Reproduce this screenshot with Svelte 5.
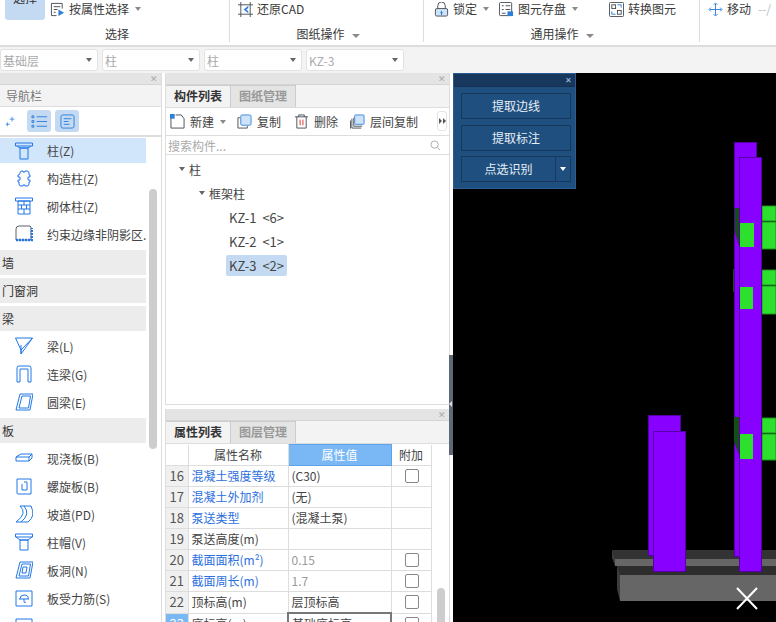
<script>
	// line icons, all drawn on an 18x18 box
	const icons = {
		column: '<path d="M.5 1h17v3H.5zM2 4l3 2h8l3-2M5 6h8v11H5z"/>',
		gz: '<path d="M5 4q0-2 2-2h1v1h2V2h2q2 0 2 2v2h1v2h-2v3h2v2h-1v2q0 2-2 2h-2v-1H8v1H6q-2 0-2-2v-2H3v-2h2V8H3V6h1z"/>',
		brick: '<path d="M.5 1h17v3H.5zM3 4h12v13H3zM3 8h12M3 12h12M9 4v4M6.500 8v4M11.500 8v4M9 12v5"/>',
		edge: '<path d="M4 1h11l1 1v13H1V4q0-3 3-3z" stroke="#5a6068"/><path d="M1 15h16V3" stroke-width="2.500" stroke-dasharray="2 1"/>',
		beam: '<path d="M.5 1h17L6 13zM17.500 1L6 17V13M6 1"/><path d="M6 8v9"/>',
		lintel: '<path d="M2 17V3q0-2 2-2h10q2 0 2 2v14h-3V4H5v13z"/>',
		ring: '<path d="M5 1h13l-3 16H1zM7 3h8.500l-2 12H4z"/>',
		slab: '<path d="M1 8l5-3h11v4l-3 3H1zM1 8h13v4M14 8l3-3"/>',
		spiral: '<path d="M2 2h14v15H3q-1 0-1-1z"/><path d="M7 7v6h5V5H9"/>',
		ramp: '<path d="M5 1q8 7-4 16h12q8-6 3-16zM9 1q7 8-3 16"/>',
		cap: '<path d="M.5 1h17v3H.5zM1 4l4 3h8l4-3M5 7h8v10H5z"/>',
		hole: '<path d="M5 1h13l-3 16H1z"/><path d="M7 3h8.500l-2 12H4z"/><path d="M8 6h4l-1 6H7z"/>',
		force: '<path d="M1 2h16v15H1z"/><path d="M4 10h10M9 6q5 0 4 4M9 6q-4 0-4 4M9 10v3q0 1 2 0"/>',
		extra: '<path d="M1 2h16v15H1z"/>'
	};

	const nav = [
		{ icon: 'column', label: '柱(Z)', active: true },
		{ icon: 'gz', label: '构造柱(Z)' },
		{ icon: 'brick', label: '砌体柱(Z)' },
		{ icon: 'edge', label: '约束边缘非阴影区...' },
		{ group: '墙' },
		{ group: '门窗洞' },
		{ group: '梁' },
		{ icon: 'beam', label: '梁(L)' },
		{ icon: 'lintel', label: '连梁(G)' },
		{ icon: 'ring', label: '圆梁(E)' },
		{ group: '板' },
		{ icon: 'slab', label: '现浇板(B)' },
		{ icon: 'spiral', label: '螺旋板(B)' },
		{ icon: 'ramp', label: '坡道(PD)' },
		{ icon: 'cap', label: '柱帽(V)' },
		{ icon: 'hole', label: '板洞(N)' },
		{ icon: 'force', label: '板受力筋(S)' },
		{ icon: 'extra', label: '' }
	];

	const combos = ['基础层', '柱', '柱', 'KZ-3'];

	const rows = [
		{ n: 16, name: '混凝土强度等级', value: '(C30)', link: true, check: true },
		{ n: 17, name: '混凝土外加剂', value: '(无)', link: true },
		{ n: 18, name: '泵送类型', value: '(混凝土泵)', link: true },
		{ n: 19, name: '泵送高度(m)', value: '' },
		{ n: 20, name: '截面面积(m²)', value: '0.15', link: true, check: true, muted: true },
		{ n: 21, name: '截面周长(m)', value: '1.7', link: true, check: true, muted: true },
		{ n: 22, name: '顶标高(m)', value: '层顶标高', check: true },
		{ n: 23, name: '底标高(m)', value: '基础底标高', check: true, current: true }
	];
</script>

<div class="app">
	<header class="ribbon">
		<section class="group g1">
			<div class="tools">
				<div class="big"><span>选择</span></div>
				<div class="tool">
					<svg class="ti" viewBox="0 0 16 16"><path d="M13 7V1.500H1.500v13H7M4 5h7M4 8h4M4 11h2" /><path class="solid blue" d="M9 8l6 3.500L9 15z" /></svg>
					按属性选择<i class="caret"></i>
				</div>
			</div>
			<div class="label">选择</div>
		</section>
		<section class="group g2">
			<div class="tools">
				<div class="tool">
					<svg class="ti" viewBox="0 0 16 16"><path d="M3 0v16M13 0v16M0 3h16M0 13h16" /><path class="solid blue" d="M6 8l5-4v2.500L9 8l2 2v2z" /></svg>
					还原CAD
				</div>
			</div>
			<div class="label">图纸操作<i class="caret lg"></i></div>
		</section>
		<section class="group g3">
			<div class="tools">
				<div class="tool lock">
					<svg class="ti" viewBox="0 0 16 16"><path d="M4 7V4a4 4 0 0 1 8 0v3" /><rect x="1.500" y="7" width="13" height="8" rx="1.500" fill="#cfe3f8" /><path class="solid blue" d="M6.500 12l1.500-3 1.500 3h-1v2h-1v-2z" /></svg>
					锁定<i class="caret"></i>
				</div>
				<div class="tool disk">
					<svg class="ti" viewBox="0 0 16 16"><rect x="0.500" y="0.500" width="13" height="14" rx="1" /><path d="M3 4h2M7 4h5M3 8h2M7 8h5M3 12h4" /><rect class="solid blue" x="9" y="10" width="6" height="5" /></svg>
					图元存盘<i class="caret"></i>
				</div>
				<div class="tool swap">
					<svg class="ti" viewBox="0 0 16 16"><rect x="0.500" y="0.500" width="15" height="15" rx="1" /><rect x="3" y="3" width="4" height="4" /><rect x="9" y="9" width="4" height="4" /><path class="bl" d="M9 3h4v3M7 13H3v-3" /></svg>
					转换图元
				</div>
			</div>
			<div class="label">通用操作<i class="caret lg"></i></div>
		</section>
		<section class="group g4">
			<div class="tools">
				<div class="tool">
					<svg class="ti" viewBox="0 0 16 16"><path class="bl" d="M8 2v12M2 8h12M6 3l2-2 2 2M6 13l2 2 2-2M3 6L1 8l2 2M13 6l2 2-2 2" /></svg>
					移动
				</div>
				<span class="faded">--/</span>
			</div>
		</section>
	</header>

	<div class="combos">
		{#each combos as c}
			<div class="combo"><span>{c}</span><i class="caret dark"></i></div>
		{/each}
	</div>

	<main class="body">
		<aside class="nav">
			<div class="dock"><span class="x">✕</span></div>
			<div class="nav-title">导航栏</div>
			<div class="nav-tools">
				<svg class="mini" viewBox="0 0 14 14"><path class="bl" d="M9 1v6M6 4h6M3 8v5M1 10.500h5" /></svg>
				<div class="toggle">
					<svg viewBox="0 0 18 14"><path class="bl" d="M6 2h11M6 7h11M6 12h11" /><path class="bl" d="M1 1h2v2H1zM1 6h2v2H1zM1 11h2v2H1z" /></svg>
				</div>
				<div class="toggle">
					<svg viewBox="0 0 16 16"><rect class="bl" x="1" y="1" width="14" height="14" rx="2" /><path class="bl" d="M4 5h8M4 8h5M4 11h6" /></svg>
				</div>
			</div>
			<div class="nav-list">
				{#each nav as item}
					{#if item.group}
						<div class="nav-group">{item.group}</div>
					{:else}
						<div class="nav-item" class:active={item.active}>
							<svg viewBox="0 0 18 18">{@html icons[item.icon]}</svg>
							<span>{item.label}</span>
						</div>
					{/if}
				{/each}
				<div class="nav-scroll"></div>
			</div>
		</aside>

		<div class="middle">
			<section class="panel top">
				<div class="dock"><span class="x">✕</span></div>
				<div class="tabs">
					<div class="tab on">构件列表</div>
					<div class="tab">图纸管理</div>
				</div>
				<div class="actions">
					<div class="act new">
						<svg viewBox="0 0 16 16"><path d="M1 3v12h14V5l-3-4H6" /><path class="solid blue" d="M0 0h5v5H0z" /></svg>
						新建<i class="caret"></i>
					</div>
					<div class="act copy">
						<svg viewBox="0 0 16 16"><path d="M3 4H1v11h10v-2" /><rect x="4" y="1" width="11" height="11" rx="1.500" fill="#cfe3f8" stroke="#3d86dc" /></svg>
						复制
					</div>
					<div class="act del">
						<svg viewBox="0 0 16 16"><path d="M1 3h14M5 3V1h6v2M3 3v12h10V3" /><path stroke="#d9302a" d="M6.500 6v6M9.500 6v6" /></svg>
						删除
					</div>
					<div class="act floors">
						<svg viewBox="0 0 16 16"><path d="M2 5v10h10M0.500 7v8.500" /><path d="M4 4v9h9" /><rect x="5" y="1" width="10" height="10" rx="1" fill="#cfe3f8" stroke="#3d86dc" /></svg>
						层间复制
					</div>
					<div class="more"><i></i><i></i></div>
				</div>
				<div class="search">
					<span>搜索构件...</span>
					<svg viewBox="0 0 12 12"><circle cx="5" cy="5" r="4" /><path d="M8 8l3 3" /></svg>
				</div>
				<div class="tree">
					<div class="node l1"><i class="caret dark"></i>柱</div>
					<div class="node l2"><i class="caret dark"></i>框架柱</div>
					<div class="node l3"><span>KZ-1 &lt;6&gt;</span></div>
					<div class="node l3"><span>KZ-2 &lt;1&gt;</span></div>
					<div class="node l3"><span class="sel">KZ-3 &lt;2&gt;</span></div>
				</div>
			</section>

			<section class="panel bottom">
				<div class="dock"><span class="x">✕</span></div>
				<div class="tabs">
					<div class="tab on">属性列表</div>
					<div class="tab">图层管理</div>
				</div>
				<div class="props">
					<table>
						<colgroup><col class="c0" /><col class="c1" /><col class="c2" /><col class="c3" /></colgroup>
						<thead>
							<tr><th></th><th>属性名称</th><th class="val">属性值</th><th>附加</th></tr>
						</thead>
						<tbody>
							{#each rows as r}
								<tr>
									<td class="num" class:cur={r.current}>{r.n}</td>
									<td class:link={r.link}>{r.name}</td>
									<td class:muted={r.muted} class:editing={r.current}>{r.value}</td>
									<td class="chk">{#if r.check}<span class="box"></span>{/if}</td>
								</tr>
							{/each}
						</tbody>
					</table>
					<div class="props-scroll"></div>
				</div>
			</section>
		</div>

		<div class="grip"></div>

		<div class="canvas">
			<!-- the 3D view: its shapes sit at their drawn coordinates -->
			<svg class="scene" viewBox="453 73 323 549">
				<path fill="#333" d="M612 550h164v9H612z" />
				<path fill="#666" d="M615 559h161v7H615z" />
				<path fill="#2d2d2d" d="M617 566h159v9H617z" />
				<path fill="#666" d="M620 575h156v26H620z" />
				<path fill="#3c3c3c" d="M612 550l3 9v7l-3-9zM617 566l3 9v26l-3-12z" />

				<path fill="#124f12" d="M733 269h3v23h-3z" />
				<path fill="#2de02d" stroke="#1c8f1c" d="M762 206h14v15h-14zM762 222h14v27h-14zM762 270h14v15h-14zM762 286h14v28h-14zM762 418h14v15h-14zM762 434h14v26h-14z" />

				<g fill="#8800ff" stroke="#5500a6">
					<rect x="648.500" y="415.500" width="32" height="140" />
					<rect x="653.500" y="431.500" width="32" height="140" />
					<rect x="734.500" y="142.500" width="22" height="414" />
				</g>
				<path fill="#124f12" d="M735 208h4v38l-4-14zM734 417h5v38l-5-14z" />
				<rect x="739.500" y="157.500" width="22" height="414" fill="#8800ff" stroke="#5500a6" />
				<path fill="#2de02d" d="M740 223h14v24h-14zM740 287h13v22h-13zM740 434h13v25h-13z" />
				<path stroke="#fff" stroke-width="2" d="M737 588l20 21M757 588l-20 21" />
			</svg>

			<div class="float">
				<div class="float-bar"><span>✕</span></div>
				<div class="float-body">
					<div class="fbtn">提取边线</div>
					<div class="fbtn">提取标注</div>
					<div class="fsplit">
						<div class="fbtn">点选识别</div>
						<div class="fdrop"></div>
					</div>
				</div>
			</div>
		</div>
	</main>
</div>

<style>
	:global(body) {
		margin: 0;
		background: #fff;
		font-family: "Noto Sans CJK SC", "Noto Sans", sans-serif;
		font-size: 12px;
		color: #333;
	}
	svg {
		display: block;
		fill: none;
		stroke: #4a4f57;
		stroke-width: 1;
	}
	svg .solid {
		fill: #4a4f57;
		stroke: none;
	}
	svg .solid.blue {
		fill: #2e7fdc;
	}
	svg .bl {
		stroke: #2e7fdc;
	}
	.app {
		width: 776px;
		height: 622px;
		overflow: hidden;
		display: flex;
		flex-direction: column;
	}

	/* ribbon */
	.ribbon {
		height: 45px;
		display: flex;
		background: #fff;
		border-bottom: 2px solid #ddd;
		flex: none;
		overflow: hidden;
	}
	.group {
		height: 42px;
		border-right: 1px solid #ddd;
		box-sizing: border-box;
		display: flex;
		flex-direction: column;
		flex: none;
	}
	.g1 { width: 230px; padding-left: 5px; }
	.g2 { width: 194px; padding-left: 8px; }
	.g3 { width: 276px; padding-left: 10px; }
	.g4 { flex: 1; padding-left: 8px; border-right: none; }
	.tools {
		height: 24px;
		display: flex;
		align-items: flex-start;
		flex: none;
	}
	.big {
		width: 40px;
		height: 20px;
		background: #c3daf2;
		border-radius: 0 0 3px 3px;
		text-align: center;
		overflow: hidden;
		margin-right: 5px;
	}
	.big span {
		display: block;
		margin-top: -11px;
		line-height: 18px;
	}
	.tool {
		display: flex;
		align-items: center;
		height: 16px;
		line-height: 16px;
		white-space: nowrap;
		margin-top: 1px;
		color: #3a3a3a;
		font-size: 12px;
	}
	.ti {
		width: 15px;
		height: 15px;
		margin-right: 4px;
		flex: none;
	}
	.disk { margin-left: 10px; }
	.swap { margin-left: 31px; }
	.faded {
		margin-left: 7px;
		color: #bbb;
	}
	.label {
		text-align: center;
		line-height: 18px;
		margin-top: 1px;
		padding-right: 5px;
		color: #3a3a3a;
	}
	.g1 .label { padding-right: 0; }
	.g3 .label { padding-right: 9px; }
	.caret {
		display: inline-block;
		width: 0;
		height: 0;
		margin-left: 6px;
		border-left: 3px solid transparent;
		border-right: 3px solid transparent;
		border-top: 4px solid #8a8a8a;
		vertical-align: middle;
	}
	.caret.lg {
		border-left-width: 4px;
		border-right-width: 4px;
		margin-left: 7px;
	}
	.caret.dark {
		border-top-color: #666;
	}

	/* level / type selectors */
	.combos {
		height: 26px;
		flex: none;
		background: #f3f3f3;
		display: flex;
		gap: 4px;
		padding-top: 2px;
		box-sizing: border-box;
	}
	.combo {
		width: 98px;
		height: 22px;
		box-sizing: border-box;
		background: #fff;
		border: 1px solid #e2e2e2;
		border-radius: 3px;
		padding: 0 5px 0 2px;
		display: flex;
		align-items: center;
		justify-content: space-between;
		color: #aaa;
	}

	/* main area */
	.body {
		flex: 1;
		display: flex;
		min-height: 0;
		background: #fff;
	}
	.dock {
		height: 11px;
		background: #e4e4e4;
		border-bottom: 1px solid #d5d5d5;
		position: relative;
		flex: none;
	}
	.x {
		position: absolute;
		right: 3px;
		top: 0;
		font-size: 9px;
		line-height: 11px;
		color: #aaa;
	}

	/* navigation */
	.nav {
		width: 161px;
		flex: none;
		box-sizing: content-box;
		border-right: 1px solid #ddd;
		display: flex;
		flex-direction: column;
		margin-right: 3px;
	}
	.nav-title {
		height: 21px;
		line-height: 21px;
		padding-left: 6px;
		background: #f3f3f3;
		border-bottom: 1px solid #ddd;
		color: #777;
		flex: none;
	}
	.nav-tools {
		height: 28px;
		display: flex;
		align-items: center;
		gap: 4px;
		padding-left: 5px;
		border-bottom: 2px solid #ddd;
		flex: none;
	}
	.mini {
		width: 11px;
		height: 13px;
		margin-right: 7px;
	}
	.toggle {
		width: 24px;
		height: 22px;
		background: #c3daf2;
		border-radius: 3px;
		display: grid;
		place-items: center;
	}
	.toggle svg {
		width: 17px;
		height: 15px;
	}
	.nav-list {
		position: relative;
		flex: 1;
		padding-top: 1px;
		overflow: hidden;
		display: flex;
		flex-direction: column;
	}
	.nav-item,
	.nav-group {
		width: 146px;
		box-sizing: border-box;
		flex: none;
	}
	.nav-item {
		height: 28px;
		display: flex;
		align-items: center;
		padding-left: 15px;
		gap: 14px;
		color: #444;
		white-space: nowrap;
	}
	.nav-item span {
		max-width: 100px;
		overflow: hidden;
	}
	.nav-item svg {
		width: 18px;
		height: 18px;
		flex: none;
		stroke: #2077e6;
	}
	.nav-item.active {
		height: 25px;
		margin-bottom: 1px;
		background: #d1e5fb;
	}
	.nav-group {
		height: 25px;
		line-height: 25px;
		margin: 2px 0 1px;
		padding-left: 2px;
		background: #ececec;
	}
	.nav-scroll {
		position: absolute;
		left: 149px;
		top: 52px;
		width: 8px;
		height: 260px;
		border-radius: 4px;
		background: #cdcdcd;
	}

	/* middle column */
	.middle {
		width: 285px;
		flex: none;
		display: flex;
		flex-direction: column;
		gap: 4px;
	}
	.panel {
		border-right: 1px solid #ddd;
		border-left: 1px solid #ddd;
		display: flex;
		flex-direction: column;
		min-height: 0;
	}
	.panel.top {
		height: 332px;
		border-bottom: 1px solid #ddd;
		box-sizing: border-box;
	}
	.panel.bottom {
		flex: 1;
	}
	.tabs {
		display: flex;
		height: 22px;
		flex: none;
		background: #f3f3f3;
		border-bottom: 1px solid #ddd;
	}
	.tab {
		width: 65px;
		line-height: 20px;
		text-align: center;
		font-size: 12px;
		font-weight: 700;
		color: #999;
		background: #e4e4e4;
		border-right: 1px solid #ccc;
		border-top: 1px solid #ccc;
		box-sizing: border-box;
	}
	.tab.on {
		color: #333;
		background: #f3f3f3;
	}
	.actions {
		height: 27px;
		flex: none;
		background: #fff;
		display: flex;
		align-items: center;
		position: relative;
		padding-left: 4px;
		border-bottom: 1px solid #ddd;
		color: #444;
	}
	.act {
		display: flex;
		align-items: center;
		white-space: nowrap;
	}
	.act svg {
		width: 15px;
		height: 15px;
		margin-right: 5px;
		flex: none;
	}
	.copy { margin-left: 11px; }
	.del { margin-left: 13px; }
	.floors { margin-left: 12px; }
	.more {
		position: absolute;
		right: 2px;
		top: 3px;
		width: 10px;
		height: 20px;
		box-sizing: border-box;
		border: 1px solid #e4e4e4;
		border-radius: 3px;
		display: flex;
		align-items: center;
		justify-content: center;
		gap: 1px;
	}
	.more i {
		border-top: 3px solid transparent;
		border-bottom: 3px solid transparent;
		border-left: 3px solid #555;
	}
	.search {
		height: 18px;
		flex: none;
		display: flex;
		align-items: center;
		justify-content: space-between;
		padding: 0 8px 0 2px;
		border-bottom: 1px solid #ddd;
		color: #aaa;
	}
	.search svg {
		width: 11px;
		height: 11px;
		stroke: #aaa;
	}
	.tree {
		flex: 1;
		padding-top: 2px;
		font-size: 12px;
		color: #444;
	}
	.node {
		height: 24px;
		display: flex;
		align-items: center;
		white-space: nowrap;
	}
	.node .caret {
		margin: 0 4px 0 0;
	}
	.l1 { padding-left: 13px; }
	.l2 { padding-left: 33px; }
	.l3 { padding-left: 60px; }
	.l3 span {
		display: block;
		padding: 0 3px;
		line-height: 21px;
		border-radius: 2px;
		font-size: 13px;
		word-spacing: 3px;
	}
	.sel {
		background: #c3daf2;
	}

	/* property table */
	.props {
		position: relative;
		flex: 1;
		overflow: hidden;
	}
	table {
		width: 265px;
		table-layout: fixed;
		border-collapse: collapse;
	}
	.c0 { width: 22px; }
	.c1 { width: 100px; }
	.c2 { width: 103px; }
	.c3 { width: 40px; }
	th,
	td {
		height: 20px;
		padding: 0 3px;
		border: 1px solid #ddd;
		border-top: none;
		font-size: 12px;
		line-height: 14px;
		white-space: nowrap;
		overflow: hidden;
	}
	th {
		font-weight: 400;
		text-align: center;
		padding: 0;
		color: #444;
	}
	th:first-child,
	td:first-child {
		border-left: none;
	}
	th.val {
		background: #7ab8f5;
		color: #fff;
		border: 1px solid #5ca3ea;
	}
	td {
		color: #444;
	}
	td.link {
		color: #2b6fe0;
	}
	td.muted {
		color: #999;
	}
	td.num {
		background: #f0f0f0;
		text-align: center;
		padding: 0;
		color: #555;
		font-size: 13px;
	}
	td.num.cur {
		background: #7ab8f5;
		color: #fff;
	}
	td.editing {
		border: 2px solid #777;
	}
	td.chk {
		text-align: center;
		padding: 0;
	}
	.box {
		display: inline-block;
		width: 12px;
		height: 12px;
		margin: -3px 0 0 1px;
		border: 1px solid #888;
		border-radius: 2px;
		vertical-align: middle;
	}
	.props-scroll {
		position: absolute;
		left: 271px;
		top: 144px;
		width: 8px;
		height: 60px;
		background: #cdcdcd;
		border-radius: 4px;
	}

	/* drag handle between panels and drawing */
	.grip {
		width: 3px;
		flex: none;
		position: relative;
		z-index: 1;
	}
	.grip::before {
		content: "";
		position: absolute;
		left: -1px;
		top: 282px;
		width: 4px;
		height: 100px;
		background: #5f6975;
	}
	.grip::after {
		content: "";
		position: absolute;
		left: -1px;
		top: 328px;
		border-top: 3px solid transparent;
		border-bottom: 3px solid transparent;
		border-right: 3px solid #d8dde2;
	}

	/* drawing canvas */
	.canvas {
		flex: 1;
		position: relative;
		background: #000;
		overflow: hidden;
	}
	.scene {
		position: absolute;
		left: 0;
		top: 0;
		width: 323px;
		height: 549px;
		stroke: none;
	}
	.float {
		position: absolute;
		left: 0;
		top: 0;
		width: 123px;
		height: 116px;
		box-sizing: border-box;
		border: 1px solid #2a5d94;
		background: #1f4f7f;
		color: #e6eef6;
	}
	.float-bar {
		height: 12px;
		background: #17385c;
		border-bottom: 1px solid #133050;
		text-align: right;
		font-size: 8px;
		line-height: 12px;
		padding-right: 3px;
		color: #a9c4e0;
	}
	.float-body {
		display: flex;
		flex-direction: column;
		gap: 6px;
		padding: 6px 4px 0 7px;
	}
	.fbtn {
		height: 26px;
		flex: 1;
		box-sizing: border-box;
		border: 1px solid #17385c;
		text-align: center;
		line-height: 24px;
	}
	.fsplit {
		display: flex;
		margin-top: -1px;
	}
	.fsplit .fbtn {
		border-right: none;
	}
	.fdrop {
		width: 16px;
		height: 26px;
		box-sizing: border-box;
		border: 1px solid #17385c;
		position: relative;
	}
	.fdrop::after {
		content: "";
		position: absolute;
		left: 4px;
		top: 10px;
		border-left: 3px solid transparent;
		border-right: 3px solid transparent;
		border-top: 4px solid #fff;
	}
</style>
